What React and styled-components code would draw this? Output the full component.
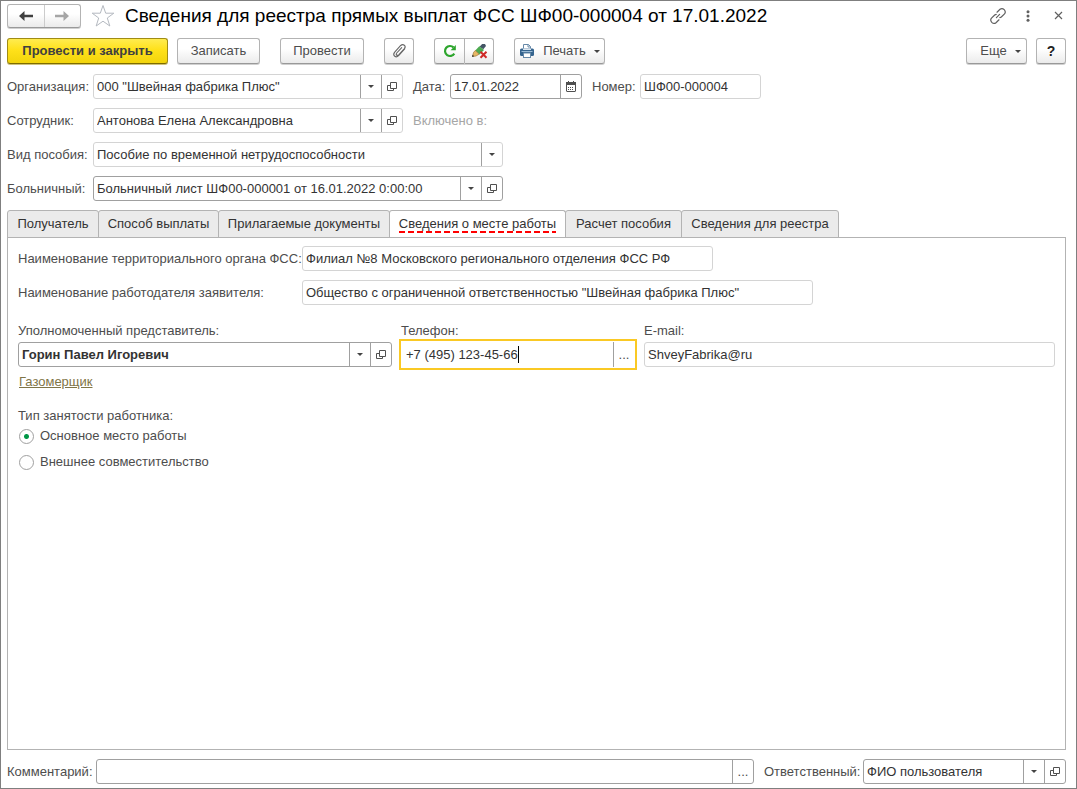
import React from 'react'
import styled, { createGlobalStyle, css } from 'styled-components'

const GlobalStyle = createGlobalStyle`
  *, *::before, *::after {
    box-sizing: border-box;
  }
  body {
    margin: 0;
    background: #fff;
  }
  body, button, input {
    font-family: "Liberation Sans", Arial, sans-serif;
    font-size: 13px;
    line-height: 16px;
    color: #4d4d4d;
  }
`

const Window = styled.div`
  min-height: 100vh;
  display: flex;
  flex-direction: column;
  padding: 2px 10px 4px 6px;
  border: 1px solid #7f7f7f;
`

const TitleBar = styled.header`
  display: flex;
  align-items: center;
  height: 25px;
`

const raised = css`
  border: 1px solid #b3b3b3;
  border-bottom-color: #999;
  border-radius: 3px;
  background: linear-gradient(#fff 40%, #ebebeb);
  box-shadow: 0 1px 0 #d0d0d0;
`

const NavGroup = styled.div`
  ${raised}
  display: flex;
  width: 74px;
  height: 24px;
`

const NavBt = styled.button`
  flex: 1;
  display: flex;
  align-items: center;
  justify-content: center;
  padding: 0;
  border: 0;
  background: none;
  & + & {
    border-left: 1px solid #ccc;
  }
`

const IconBt = styled.button`
  display: flex;
  align-items: center;
  justify-content: center;
  width: 24px;
  height: 24px;
  padding: 0;
  border: 0;
  background: none;
`

const StarBt = styled(IconBt)`
  margin: 0 10px;
`

const Title = styled.h1`
  flex: 1;
  margin: 0;
  font-size: 19px;
  line-height: 24px;
  font-weight: 400;
  color: #000;
  white-space: nowrap;
`

const WindowBts = styled.div`
  display: flex;
  gap: 6px;
  margin-right: -4px;
`

const Toolbar = styled.div`
  display: flex;
  align-items: center;
  margin-top: 10px;
`

const Bt = styled.button`
  ${raised}
  display: flex;
  align-items: center;
  justify-content: center;
  width: ${({ $w }) => $w}px;
  height: 26px;
  margin-right: ${({ $gap = 20 }) => $gap}px;
  padding: 0;
  white-space: nowrap;
  ${({ $primary }) => $primary && css`
    border-color: #a08c14;
    border-bottom-color: #7d6c00;
    background: linear-gradient(#ffec50, #ffe11a 45%, #f2d40c);
    box-shadow: 0 1px 0 #cfc27a;
    font-weight: 700;
    color: #404040;
  `}
`

const BtPair = styled.div`
  display: flex;
  margin-right: 20px;
  & > button {
    margin: 0;
  }
  & > button:first-child {
    border-radius: 3px 0 0 3px;
  }
  & > button:last-child {
    border-left: 0;
    border-radius: 0 3px 3px 0;
  }
`

const Spacer = styled.div`
  flex: 1;
`

const Caption = styled.span`
  margin: 0 8px;
`

const Help = styled.b`
  font-size: 14px;
  color: #222;
`

const Form = styled.div`
  display: flex;
  flex-direction: column;
  gap: 9px;
  margin-top: 10px;
`

const Row = styled.div`
  display: flex;
  align-items: center;
`

const Label = styled.label`
  flex: none;
  width: ${({ $w }) => ($w ? `${$w}px` : 'auto')};
  white-space: nowrap;
`

const MutedLabel = styled.span`
  margin-left: 10px;
  color: #a6a6a6;
`

const FieldBox = styled.div`
  display: flex;
  flex: ${({ $w }) => ($w ? `0 1 ${$w}px` : '1')};
  min-width: 0;
  height: 25px;
  border: 1px solid ${({ $dark }) => ($dark ? '#a0a0a0' : '#d4d4d4')};
  border-radius: 3px;
  background: #fff;
`

const Input = styled.input`
  flex: 1;
  min-width: 0;
  padding: 0 3px;
  border: 0;
  outline: 0;
  background: none;
  color: #333;
  font-weight: ${({ $bold }) => ($bold ? 700 : 400)};
`

const FieldBt = styled.button`
  flex: none;
  display: flex;
  align-items: center;
  justify-content: center;
  width: 21px;
  padding: 0;
  border: 0;
  border-left: 1px solid #a0a0a0;
  background: none;
`

const Tabs = styled.div`
  display: flex;
  margin-top: 9px;
`

const Tab = styled.button`
  width: ${({ $w }) => $w}px;
  height: 28px;
  margin-right: -1px;
  padding: 0;
  border: 1px solid #b3b3b3;
  border-radius: 3px 3px 0 0;
  background: #ebebeb;
  color: #333;
  white-space: nowrap;
  ${({ $active }) => $active && css`
    border-bottom-color: #fff;
    background: #fff;
  `}
`

const Marked = styled.span`
  display: inline-block;
  padding-bottom: 1px;
  margin-bottom: -3px;
  background: repeating-linear-gradient(90deg, #f00 0 6px, transparent 6px 9px) 0 100% / 100% 2px no-repeat;
`

const Panel = styled.section`
  flex: 1;
  display: flex;
  flex-direction: column;
  margin-top: -1px;
  padding: 8px 10px;
  border: 1px solid #b3b3b3;
`

const PanelRows = styled.div`
  display: flex;
  flex-direction: column;
  gap: 9px;
`

const Contacts = styled.div`
  display: flex;
  gap: 8px;
  margin-top: 18px;
`

const Stack = styled.div`
  display: flex;
  flex-direction: column;
  flex: 0 1 ${({ $w }) => $w}px;
  min-width: 0;
  & > ${FieldBox} {
    flex: none;
    margin-top: 3px;
  }
`

/* the frame of the focused field lies outside its own box */
const FocusBox = styled.div`
  display: flex;
  align-items: stretch;
  height: 31px;
  margin-bottom: -3px;
  padding: 1px;
  border: 2px solid #fac924;
`

const PhoneStack = styled(Stack)`
  margin: 0 -1px;
  & > ${Label} {
    margin-left: 2px;
  }
`

const PhoneInput = styled(Input)`
  flex: none;
  field-sizing: content;
  padding: 0 0 0 4px;
`

const Caret = styled.span`
  width: 1px;
  margin: 4px 0;
  background: #000;
`

const Link = styled.a`
  align-self: flex-start;
  margin: 7px 0 0 1px;
  color: #7f7547;
  text-decoration: underline;
`

const Group = styled.fieldset`
  margin: 18px 0 0;
  padding: 0;
  border: 0;
`

const Legend = styled.legend`
  padding: 0;
`

const RadioRow = styled.label`
  display: flex;
  align-items: center;
  gap: 6px;
  height: 16px;
  margin: 4px 0 10px 1px;
`

const Radio = styled.input`
  appearance: none;
  width: 15px;
  height: 15px;
  margin: 0;
  border: 1px solid #a0a0a0;
  border-radius: 50%;
  background: #fff;
  &:checked {
    background: radial-gradient(circle, #009646 2px, #fff 3px);
  }
`

const Footer = styled.footer`
  display: flex;
  align-items: center;
  margin-top: 9px;
`

const ArrowIcon = ({ flip, color }) => (
  <svg width="16" height="12" viewBox="0 0 16 12" transform={flip ? 'scale(-1 1)' : undefined}>
    <path d="M1 6 L6.5 1 V4.8 H15 V7.2 H6.5 V11 Z" fill={color} />
  </svg>
)

const StarIcon = () => (
  <svg width="24" height="24" viewBox="0 0 24 24" fill="none" stroke="#b4b9c0">
    <path d="M12 1.5 L14.7 9.2 H22.8 L16.3 14 L18.8 22 L12 17.2 L5.2 22 L7.7 14 L1.2 9.2 H9.3 Z" />
  </svg>
)

const LinkIcon = () => (
  <svg width="18" height="18" viewBox="0 0 18 18" fill="none" stroke="#606060" strokeWidth="1.2" strokeLinecap="round">
    <path d="M8 5.2 L11 2.3 Q13.2 0.7 15.2 2.7 Q17.2 4.9 15.5 6.9 L12.3 10 Q11.6 10.6 10.8 10.6" />
    <path d="M10 12.8 L7 15.7 Q4.8 17.3 2.8 15.3 Q0.8 13.1 2.5 11.1 L5.7 8 Q6.4 7.4 7.2 7.4" />
    <path d="M7.4 10.6 L10.6 7.4" />
  </svg>
)

const DotsIcon = () => (
  <svg width="4" height="12" viewBox="0 0 4 12" fill="#606060">
    <circle cx="2" cy="1.7" r="1.5" />
    <circle cx="2" cy="6" r="1.5" />
    <circle cx="2" cy="10.3" r="1.5" />
  </svg>
)

const CloseIcon = () => (
  <svg width="9" height="9" viewBox="0 0 9 9" stroke="#606060" strokeWidth="1.2">
    <path d="M1 1 L8 8 M8 1 L1 8" />
  </svg>
)

const ClipIcon = () => (
  <svg width="15" height="16" viewBox="0 0 15 16" fill="none" stroke="#666" strokeWidth="1.1" strokeLinecap="round">
    <path d="M12.7 5.8 L6.6 12.6 Q4.7 14.6 2.8 13.3 Q0.8 11.5 2.5 9.3 L8.7 2.5 Q10.5 0.9 12.3 2.2 Q14 3.8 12.4 5.7 L6.7 11.8 Q5.5 12.9 4.6 12 Q3.7 11.1 4.7 10 L9.7 4.7" />
  </svg>
)

const RefreshIcon = () => (
  <svg width="14" height="14" viewBox="0 0 14 14">
    <path d="M11.3 9.6 A5 5 0 1 1 10.5 3.4" fill="none" stroke="#2da52d" strokeWidth="2.2" />
    <path d="M12.8 1 V6.2 H7.6 Z" fill="#2da52d" />
  </svg>
)

const PencilIcon = () => (
  <svg width="17" height="16" viewBox="0 0 17 16">
    <path d="M8.5 3.8 L11.2 1 H14 L15 3 L12.3 6.2 Z" fill="#456" />
    <path d="M4 7.8 L8.3 3.2 L13 7 L8.5 11.5 Z" fill="#4dab50" />
    <path d="M4.2 7.5 L8.2 11.2 L5 13 L1.5 13.5 L2.5 9.5 Z" fill="#e7b765" stroke="#9b7a3d" strokeWidth="0.7" />
    <path d="M1 14 L1.6 11.8 L3.2 13.3 Z" fill="#333" />
    <path d="M9.5 8.7 L15.5 14.7 M15.5 8.7 L9.5 14.7" stroke="#cf2a27" strokeWidth="2" />
  </svg>
)

const PrinterIcon = () => (
  <svg width="16" height="16" viewBox="0 0 16 16">
    <path d="M4.5 7 V1.5 H9.5 L11.5 3.5 V7" fill="#fff" stroke="#6689a8" />
    <path d="M9 1.5 V4 H11.5" fill="none" stroke="#6689a8" />
    <rect x="1" y="5.5" width="14" height="7.5" rx="1.5" fill="#36658f" />
    <rect x="4" y="5.5" width="8" height="1.5" fill="#dbe6ef" />
    <rect x="2.5" y="8" width="11" height="1" fill="#9bbbd5" />
    <rect x="4.5" y="10" width="7" height="4.5" fill="#fff" stroke="#6689a8" />
  </svg>
)

const DownIcon = () => (
  <svg width="6" height="3" viewBox="0 0 6 3">
    <path d="M0 0 H6 L3 3 Z" fill="#444" />
  </svg>
)

const OpenIcon = () => (
  <svg width="10" height="10" viewBox="0 0 10 10" fill="none" stroke="#505050">
    <path d="M3.5 0.5 H9.5 V6.5 H3.5 Z M3 3.5 H0.5 V8.5 H6.5 V7" />
  </svg>
)

const CalendarIcon = () => (
  <svg width="10" height="11" viewBox="0 0 10 11">
    <path d="M1 1.5 H9 Q9.5 1.5 9.5 2 V10 Q9.5 10.5 9 10.5 H1 Q0.5 10.5 0.5 10 V2 Q0.5 1.5 1 1.5 Z" fill="#fff" stroke="#505050" />
    <path d="M0 1 H10 V4 H0 Z M2 0 H3 V1 H2 Z M7 0 H8 V1 H7 Z" fill="#505050" />
    <path d="M2 6.5 H8 M2 8.5 H8" stroke="#505050" strokeDasharray="1 1" />
  </svg>
)

const actions = {
  list: { icon: <DownIcon />, label: 'Выбрать из списка' },
  open: { icon: <OpenIcon />, label: 'Открыть' },
  date: { icon: <CalendarIcon />, label: 'Календарь' },
  more: { icon: '...', label: 'Подробнее' }
}

const Field = ({ id, value, w, dark, bold, buttons = [] }) => (
  <FieldBox $w={w} $dark={dark}>
    <Input id={id} defaultValue={value} $bold={bold} />
    {buttons.map(b => (
      <FieldBt key={b} type='button' aria-label={actions[b].label}>{actions[b].icon}</FieldBt>
    ))}
  </FieldBox>
)

const SideLabel = styled(Label)`
  margin-left: 10px;
`

const tabs = [
  { name: 'Получатель', w: 92 },
  { name: 'Способ выплаты', w: 121 },
  { name: 'Прилагаемые документы', w: 172 },
  { name: 'Сведения о месте работы', w: 177, active: true },
  { name: 'Расчет пособия', w: 117 },
  { name: 'Сведения для реестра', w: 158 }
]

const App = () => {
  return (
    <Window>
      <GlobalStyle />
      <TitleBar>
        <NavGroup>
          <NavBt aria-label='Назад'><ArrowIcon color='#404040' /></NavBt>
          <NavBt aria-label='Вперед'><ArrowIcon flip color='#a6a6a6' /></NavBt>
        </NavGroup>
        <StarBt aria-label='В избранное'><StarIcon /></StarBt>
        <Title>Сведения для реестра прямых выплат ФСС ШФ00-000004 от 17.01.2022</Title>
        <WindowBts>
          <IconBt aria-label='Ссылка'><LinkIcon /></IconBt>
          <IconBt aria-label='Меню'><DotsIcon /></IconBt>
          <IconBt aria-label='Закрыть'><CloseIcon /></IconBt>
        </WindowBts>
      </TitleBar>

      <Toolbar>
        <Bt $primary $w={161} $gap={9}>Провести и закрыть</Bt>
        <Bt $w={83}>Записать</Bt>
        <Bt $w={84}>Провести</Bt>
        <Bt $w={30} aria-label='Файлы'><ClipIcon /></Bt>
        <BtPair>
          <Bt $w={31} aria-label='Обновить'><RefreshIcon /></Bt>
          <Bt $w={29} aria-label='Отменить правки'><PencilIcon /></Bt>
        </BtPair>
        <Bt $w={91}><PrinterIcon /><Caption>Печать</Caption><DownIcon /></Bt>
        <Spacer />
        <Bt $w={61} $gap={9}><Caption>Еще</Caption><DownIcon /></Bt>
        <Bt $w={30} $gap={0}><Help>?</Help></Bt>
      </Toolbar>

      <Form>
        <Row>
          <Label $w={86} htmlFor='org'>Организация:</Label>
          <Field id='org' w={310} value='000 "Швейная фабрика Плюс"' buttons={['list', 'open']} />
          <SideLabel $w={37} htmlFor='date'>Дата:</SideLabel>
          <Field id='date' w={132} dark value='17.01.2022' buttons={['date']} />
          <SideLabel $w={48} htmlFor='num'>Номер:</SideLabel>
          <Field id='num' w={121} value='ШФ00-000004' />
        </Row>
        <Row>
          <Label $w={86} htmlFor='emp'>Сотрудник:</Label>
          <Field id='emp' w={310} value='Антонова Елена Александровна' buttons={['list', 'open']} />
          <MutedLabel>Включено в:</MutedLabel>
        </Row>
        <Row>
          <Label $w={86} htmlFor='kind'>Вид пособия:</Label>
          <Field id='kind' w={410} value='Пособие по временной нетрудоспособности' buttons={['list']} />
        </Row>
        <Row>
          <Label $w={86} htmlFor='sick'>Больничный:</Label>
          <Field id='sick' w={410} dark value='Больничный лист ШФ00-000001 от 16.01.2022 0:00:00' buttons={['list', 'open']} />
        </Row>
      </Form>

      <Tabs role='tablist'>
        {tabs.map(({ name, w, active }) => (
          <Tab key={name} role='tab' aria-selected={!!active} $w={w} $active={active}>
            {active ? <Marked>{name}</Marked> : name}
          </Tab>
        ))}
      </Tabs>
      <Panel role='tabpanel'>
        <PanelRows>
          <Row>
            <Label $w={284} htmlFor='fss'>Наименование территориального органа ФСС:</Label>
            <Field id='fss' w={411} value='Филиал №8 Московского регионального отделения ФСС РФ' />
          </Row>
          <Row>
            <Label $w={284} htmlFor='employer'>Наименование работодателя заявителя:</Label>
            <Field id='employer' w={511} value='Общество с ограниченной ответственностью "Швейная фабрика Плюс"' />
          </Row>
        </PanelRows>
        <Contacts>
          <Stack $w={374}>
            <Label htmlFor='rep'>Уполномоченный представитель:</Label>
            <Field id='rep' w={374} dark bold value='Горин Павел Игоревич' buttons={['list', 'open']} />
          </Stack>
          <PhoneStack $w={238}>
            <Label htmlFor='phone'>Телефон:</Label>
            <FocusBox>
              <PhoneInput id='phone' defaultValue='+7 (495) 123-45-66' />
              <Caret />
              <Spacer />
              <FieldBt type='button' aria-label='Подробнее'>...</FieldBt>
            </FocusBox>
          </PhoneStack>
          <Stack $w={411}>
            <Label htmlFor='email'>E-mail:</Label>
            <Field id='email' w={411} value='ShveyFabrika@ru' />
          </Stack>
        </Contacts>
        <Link href='#position'>Газомерщик</Link>
        <Group>
          <Legend>Тип занятости работника:</Legend>
          <RadioRow><Radio type='radio' name='job' defaultChecked />Основное место работы</RadioRow>
          <RadioRow><Radio type='radio' name='job' />Внешнее совместительство</RadioRow>
        </Group>
      </Panel>

      <Footer>
        <Label $w={89} htmlFor='comment'>Комментарий:</Label>
        <Field id='comment' dark value='' buttons={['more']} />
        <SideLabel $w={99} htmlFor='resp'>Ответственный:</SideLabel>
        <Field id='resp' w={203} dark value='ФИО пользователя' buttons={['list', 'open']} />
      </Footer>
    </Window>
  )
}

export default App
